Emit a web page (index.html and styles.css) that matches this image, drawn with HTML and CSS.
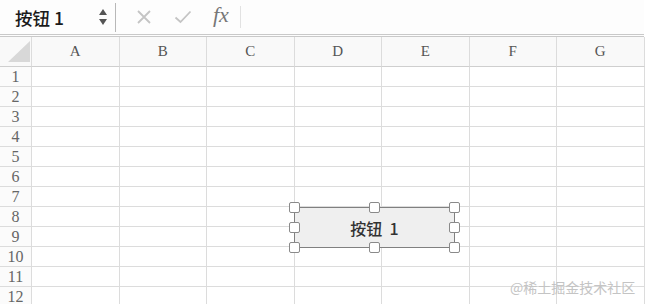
FILE: index.html
```html
<!DOCTYPE html>
<html lang="zh-CN">
<head>
  <meta charset="UTF-8">
  <title>按钮 1</title>
  <link rel="stylesheet" href="styles.css">
</head>
<body>

  <div class="app">
    <div class="formula-bar">
      <div class="name-box">按钮 1</div>
      <div class="spinner">
        <span class="arrow-up"></span>
        <span class="arrow-down"></span>
      </div>
      <div class="sep"></div>
      <svg class="icon" width="16" height="16" viewBox="0 0 16 16">
        <path d="M2 2 L14 14 M14 2 L2 14" stroke="#c4c4c4" stroke-width="1.8" fill="none"/>
      </svg>
      <svg class="icon" width="18" height="16" viewBox="0 0 18 16">
        <path d="M1.5 8.5 L6.5 13 L16.5 2.5" stroke="#c4c4c4" stroke-width="1.8" fill="none"/>
      </svg>
      <span class="fx">fx</span>
      <div class="sep light"></div>
      <div class="formula-input"></div>
    </div>

    <div class="sheet">
      <div class="row head">
        <div class="cell corner"><span class="tri"></span></div>
        <div class="cell">A</div>
        <div class="cell">B</div>
        <div class="cell">C</div>
        <div class="cell">D</div>
        <div class="cell">E</div>
        <div class="cell">F</div>
        <div class="cell">G</div>
      </div>
      <div class="row"><div class="cell num">1</div><div class="cell"></div><div class="cell"></div><div class="cell"></div><div class="cell"></div><div class="cell"></div><div class="cell"></div><div class="cell"></div></div>
      <div class="row"><div class="cell num">2</div><div class="cell"></div><div class="cell"></div><div class="cell"></div><div class="cell"></div><div class="cell"></div><div class="cell"></div><div class="cell"></div></div>
      <div class="row"><div class="cell num">3</div><div class="cell"></div><div class="cell"></div><div class="cell"></div><div class="cell"></div><div class="cell"></div><div class="cell"></div><div class="cell"></div></div>
      <div class="row"><div class="cell num">4</div><div class="cell"></div><div class="cell"></div><div class="cell"></div><div class="cell"></div><div class="cell"></div><div class="cell"></div><div class="cell"></div></div>
      <div class="row"><div class="cell num">5</div><div class="cell"></div><div class="cell"></div><div class="cell"></div><div class="cell"></div><div class="cell"></div><div class="cell"></div><div class="cell"></div></div>
      <div class="row"><div class="cell num">6</div><div class="cell"></div><div class="cell"></div><div class="cell"></div><div class="cell"></div><div class="cell"></div><div class="cell"></div><div class="cell"></div></div>
      <div class="row"><div class="cell num">7</div><div class="cell"></div><div class="cell"></div><div class="cell"></div><div class="cell"></div><div class="cell"></div><div class="cell"></div><div class="cell"></div></div>
      <div class="row"><div class="cell num">8</div><div class="cell"></div><div class="cell"></div><div class="cell"></div><div class="cell"></div><div class="cell"></div><div class="cell"></div><div class="cell"></div></div>
      <div class="row"><div class="cell num">9</div><div class="cell"></div><div class="cell"></div><div class="cell"></div><div class="cell"></div><div class="cell"></div><div class="cell"></div><div class="cell"></div></div>
      <div class="row"><div class="cell num">10</div><div class="cell"></div><div class="cell"></div><div class="cell"></div><div class="cell"></div><div class="cell"></div><div class="cell"></div><div class="cell"></div></div>
      <div class="row"><div class="cell num">11</div><div class="cell"></div><div class="cell"></div><div class="cell"></div><div class="cell"></div><div class="cell"></div><div class="cell"></div><div class="cell"></div></div>
      <div class="row"><div class="cell num">12</div><div class="cell"></div><div class="cell"></div><div class="cell"></div><div class="cell"></div><div class="cell"></div><div class="cell"></div><div class="cell"></div></div>

      <!-- form control, selected -->
      <div class="form-button">
        <span>按钮&nbsp;&nbsp;1</span>
        <i class="handle h-tl"></i><i class="handle h-tm"></i><i class="handle h-tr"></i>
        <i class="handle h-ml"></i><i class="handle h-mr"></i>
        <i class="handle h-bl"></i><i class="handle h-bm"></i><i class="handle h-br"></i>
      </div>

      <div class="watermark">@稀土掘金技术社区</div>
    </div>
  </div>

</body>
</html>
```

FILE: styles.css
```css
body {
  margin: 0;
  background: #fff;
  overflow: hidden;
  font-family: "Liberation Serif", "Noto Sans CJK SC", serif;
}
.app {
  width: 644px;
}
.formula-bar {
  display: flex;
  align-items: center;
  height: 34px;
  background: #fdfdfd;
  border-bottom: 3px double #c9c9c9;
}
.name-box {
  width: 82px;
  padding-left: 15px;
  font-family: "Noto Sans CJK SC", sans-serif;
  font-size: 17.5px;
  font-weight: 500;
  color: #1a1a1a;
}
.spinner {
  display: flex;
  flex-direction: column;
  align-items: center;
  gap: 4px;
  width: 12px;
}
.arrow-up, .arrow-down {
  width: 0;
  height: 0;
  border-left: 4.5px solid transparent;
  border-right: 4.5px solid transparent;
}
.arrow-up {
  border-bottom: 6px solid #555;
}
.arrow-down {
  border-top: 6px solid #555;
}
.sep {
  width: 1px;
  height: 29px;
  margin-left: 6px;
  background: #b8b8b8;
}
.sep.light {
  height: 22px;
  margin-left: 11px;
  background: #e2e2e2;
}
.icon {
  margin-left: 20px;
}
.icon + .icon {
  margin-left: 22px;
}
.fx {
  margin-left: 21px;
  font-family: "Liberation Serif", serif;
  font-style: italic;
  font-size: 22px;
  color: #777;
  position: relative;
  top: -2px;
}
.formula-input {
  flex: 1;
}

.sheet {
  position: relative;
}
.row {
  display: grid;
  grid-template-columns: 32px repeat(7, 87.5px);
  height: 20px;
}
.row.head {
  height: 30px;
}
.cell {
  box-sizing: border-box;
  border-right: 1px solid #dcdcdc;
  border-bottom: 1px solid #dcdcdc;
  display: flex;
  align-items: center;
  justify-content: center;
  color: #555;
  font-size: 15px;
}
.row.head .cell {
  background: #f9f9f9;
  font-size: 15px;
  border-bottom-color: #cfcfcf;
}
.cell.num {
  background: #fbfbfb;
  font-size: 16px;
  color: #666;
}
.cell.corner {
  position: relative;
}
.tri {
  position: absolute;
  left: 8px;
  top: 4px;
  width: 22px;
  height: 21px;
  background: #d8d8d8;
  clip-path: polygon(100% 0, 100% 100%, 0 100%);
}

.form-button {
  position: absolute;
  left: 294px;
  top: 170px;
  width: 161px;
  height: 41px;
  box-sizing: border-box;
  border: 1px solid #808080;
  background: #efefef;
  display: flex;
  align-items: center;
  justify-content: center;
  font-family: "Noto Sans CJK SC", sans-serif;
  font-size: 16px;
  font-weight: 500;
  color: #333;
}
.handle {
  position: absolute;
  width: 9px;
  height: 9px;
  border: 1px solid #8a8a8a;
  border-radius: 2px;
  background: #fff;
  margin: -6px 0 0 -6px;
}
.h-tl, .h-tm, .h-tr { top: 0; }
.h-ml, .h-mr { top: 20px; }
.h-bl, .h-bm, .h-br { top: 40px; }
.h-tl, .h-ml, .h-bl { left: 0; }
.h-tm, .h-bm { left: 80px; }
.h-tr, .h-mr, .h-br { left: 160px; }

.watermark {
  position: absolute;
  left: 510px;
  top: 240px;
  font-family: "Noto Sans CJK SC", sans-serif;
  font-size: 14px;
  color: #c4c4c4;
}
```
